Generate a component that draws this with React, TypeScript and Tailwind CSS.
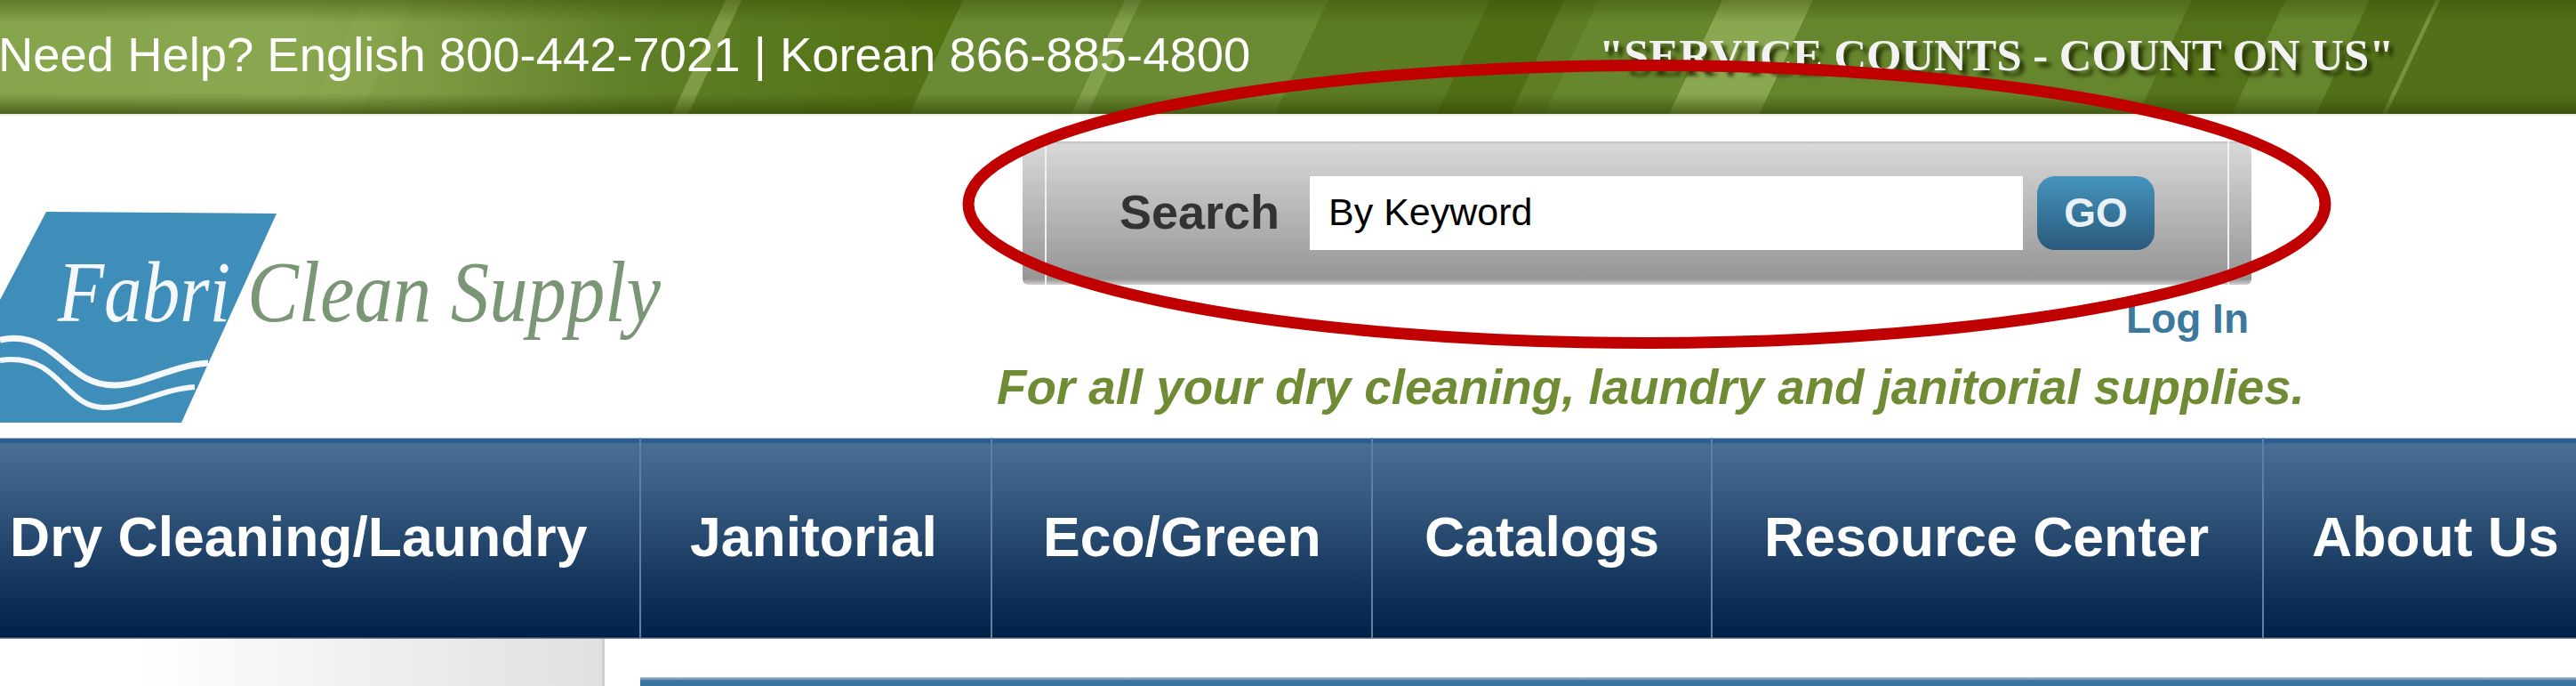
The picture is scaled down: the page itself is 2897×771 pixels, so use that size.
const nav = [
  { t: "Dry Cleaning/Laundry", w: "w-[719px] pl-[11px]", border: false },
  { t: "Janitorial", w: "w-[395px] pl-[55px]", border: true },
  { t: "Eco/Green", w: "w-[428px] pl-[57px]", border: true },
  { t: "Catalogs", w: "w-[382px] pl-[58px]", border: true },
  { t: "Resource Center", w: "w-[620px] pl-[58px]", border: true },
  { t: "About Us", w: "w-[353px] pl-[54px]", border: true },
];

const BANDS: [number, number, string, number][] = [
  [408, 465, "#a0bb60", 0.14],
  [816, 834, "#a3bd68", 0.5],
  [1083, 1494, "#6a8a33", 1],
  [1265, 1283, "#8fab58", 0.7],
  [1494, 1676, "#5b7b22", 1],
  [1676, 1759, "#4f6e14", 1],
  [1759, 1797, "#5e7d25", 1],
  [1797, 1937, "#67872f", 1],
  [1937, 2039, "#8aa850", 1],
  [2039, 2465, "#66862e", 1],
  [2465, 2570, "#55731a", 1],
  [2570, 2665, "#66862e", 1],
  [2665, 2980, "#52701a", 1],
  [2739, 2744, "#7f9c48", 0.8],
];

function TopBarTexture() {
  return (
    <svg className="absolute inset-0 w-full h-full" viewBox="0 0 2897 128" preserveAspectRatio="none" aria-hidden="true">
      <defs>
        <linearGradient id="green" gradientUnits="userSpaceOnUse" x1="0" x2="1083" y1="0" y2="0">
          <stop offset="0" stopColor="#86a44c" />
          <stop offset="0.3" stopColor="#8aa850" />
          <stop offset="0.45" stopColor="#7d9a42" />
          <stop offset="0.66" stopColor="#5f7f26" />
          <stop offset="1" stopColor="#517012" />
        </linearGradient>
        <linearGradient id="edge" x1="0" x2="0" y1="0" y2="1">
          <stop offset="0" stopColor="#3a4f08" stopOpacity="0.5" />
          <stop offset="0.2" stopColor="#3a4f08" stopOpacity="0" />
          <stop offset="0.82" stopColor="#3a4f08" stopOpacity="0" />
          <stop offset="1" stopColor="#324506" stopOpacity="0.7" />
        </linearGradient>
      </defs>
      <rect width="2897" height="128" fill="url(#green)" />
      {BANDS.map(([a, b, c, o]) => (
        <polygon key={a} points={`${a},0 ${b},0 ${b - 60},128 ${a - 60},128`} fill={c} opacity={o} />
      ))}
      <rect width="2897" height="128" fill="url(#edge)" />
    </svg>
  );
}

function Logo() {
  return (
    <div className="relative w-[760px] h-[262px] font-['Liberation_Serif',serif] italic">
      <svg className="absolute inset-0 w-full h-full" viewBox="0 0 760 262" aria-hidden="true">
        <polygon points="52,15 311,17 204,252 0,252 0,114" fill="#3f8eb9" />
        <path d="M0 159 C14 156 30 156 48 166 C76 182 90 210 129 210 C160 210 192 188 234 185" stroke="#f4f8fb" strokeWidth="7" fill="none" />
        <path d="M0 182 C14 180 30 180 48 190 C74 206 86 235 117 235 C150 235 182 214 219 212" stroke="#f4f8fb" strokeWidth="6" fill="none" />
      </svg>
      <span className="absolute left-[65px] top-[56px] text-[98px] leading-none text-[#f4f8fb] scale-x-[0.87] origin-left">Fabri</span>
      <span className="absolute left-[278px] top-[56px] text-[98px] leading-none text-[#7b9577] whitespace-nowrap origin-left scale-x-[0.885]">Clean Supply</span>
    </div>
  );
}

export default function App() {
  return (
    <div className="relative w-[2897px] h-[771px] overflow-hidden bg-white font-['Liberation_Sans',Arial,sans-serif]">
      <header className="relative h-[130px] flex items-center overflow-hidden border-b-2 border-[#e9ebdc]">
        <TopBarTexture />
        <div className="relative flex items-center w-full -mt-1">
          <span className="w-[1800px] -ml-[2px] shrink-0 text-[54.4px] text-white whitespace-nowrap">Need Help? English 800-442-7021 | Korean 866-885-4800</span>
          <span className="font-['Liberation_Serif',serif] font-bold text-[50.7px] text-[#f2f2f2] whitespace-nowrap [text-shadow:5px_6px_4px_#2a3606]">"SERVICE COUNTS - COUNT ON US"</span>
        </div>
      </header>

      <section className="h-[362px] flex">
        <div className="w-[1150px] shrink-0 pt-[93px]">
          <Logo />
        </div>
        <div className="w-[1382px] shrink-0 pt-[29px] flex flex-col">
          <div className="h-[161px] flex bg-[linear-gradient(#bcbcbc_0,#d8d8d8_3px,#969696_96%,#cfcfcf_100%)] rounded-t-[14px] rounded-b-[6px]">
            <div className="w-[27px] border-r-2 border-[#f1f1f1]" />
            <div className="flex-1 flex items-center">
              <span className="w-[296px] text-right pr-[34px] pb-[3px] text-[54px] font-bold text-[#333]">Search</span>
              <div className="w-[802px] h-[83px] bg-white flex items-center pl-[21px] pb-[3px] text-[43px] text-black">By Keyword</div>
              <button className="ml-[16px] w-[132px] h-[83px] rounded-[20px] bg-gradient-to-b from-[#4594bf] to-[#2a5a7b] text-[46px] font-bold text-[#e9f1f6] flex items-center justify-center">GO</button>
            </div>
            <div className="w-[27px] border-l-2 border-[#f1f1f1]" />
          </div>
          <div className="text-right text-[46px] leading-[46px] font-bold text-[#3b789b] mt-[15px] pr-[3px]">Log In</div>
          <div className="text-[54.7px] leading-[60px] italic font-bold text-[#6f8c35] whitespace-nowrap mt-[24px] -ml-[29px]">For all your dry cleaning, laundry and janitorial supplies.</div>
        </div>
      </section>

      <nav className="h-[226px] flex bg-[linear-gradient(#9fb2c6_0,#9fb2c6_1px,#2c5c94_1px,#2c5c94_5px,#4a6e94_7px,#012248_98%,#001a3c_99%,#8fa3b8_100%)]">
        {nav.map((n) => (
          <div key={n.t} className={`${n.w} shrink-0 flex items-center pb-[2px] text-[62.5px] font-bold text-white whitespace-nowrap ${n.border ? "border-l-2 border-[#5f80a3]" : ""}`}>{n.t}</div>
        ))}
      </nav>

      <div className="flex h-[53px]">
        <div className="w-[680px] shrink-0 bg-gradient-to-r from-white from-[22%] to-[#e0e0e0] border-r-[3px] border-[#cfcfcf]" />
        <div className="flex-1 pl-[40px] pt-[43px]">
          <div className="h-[10px] bg-[linear-gradient(#b5c8d8_0,#38749f_4px)]" />
        </div>
      </div>

      <svg className="absolute left-0 top-0 w-[2897px] h-[771px] pointer-events-none" viewBox="0 0 2897 771" aria-hidden="true">
        <ellipse cx="1852" cy="229.5" rx="763" ry="156" fill="none" stroke="#c00000" strokeWidth="13" />
      </svg>
    </div>
  );
}
